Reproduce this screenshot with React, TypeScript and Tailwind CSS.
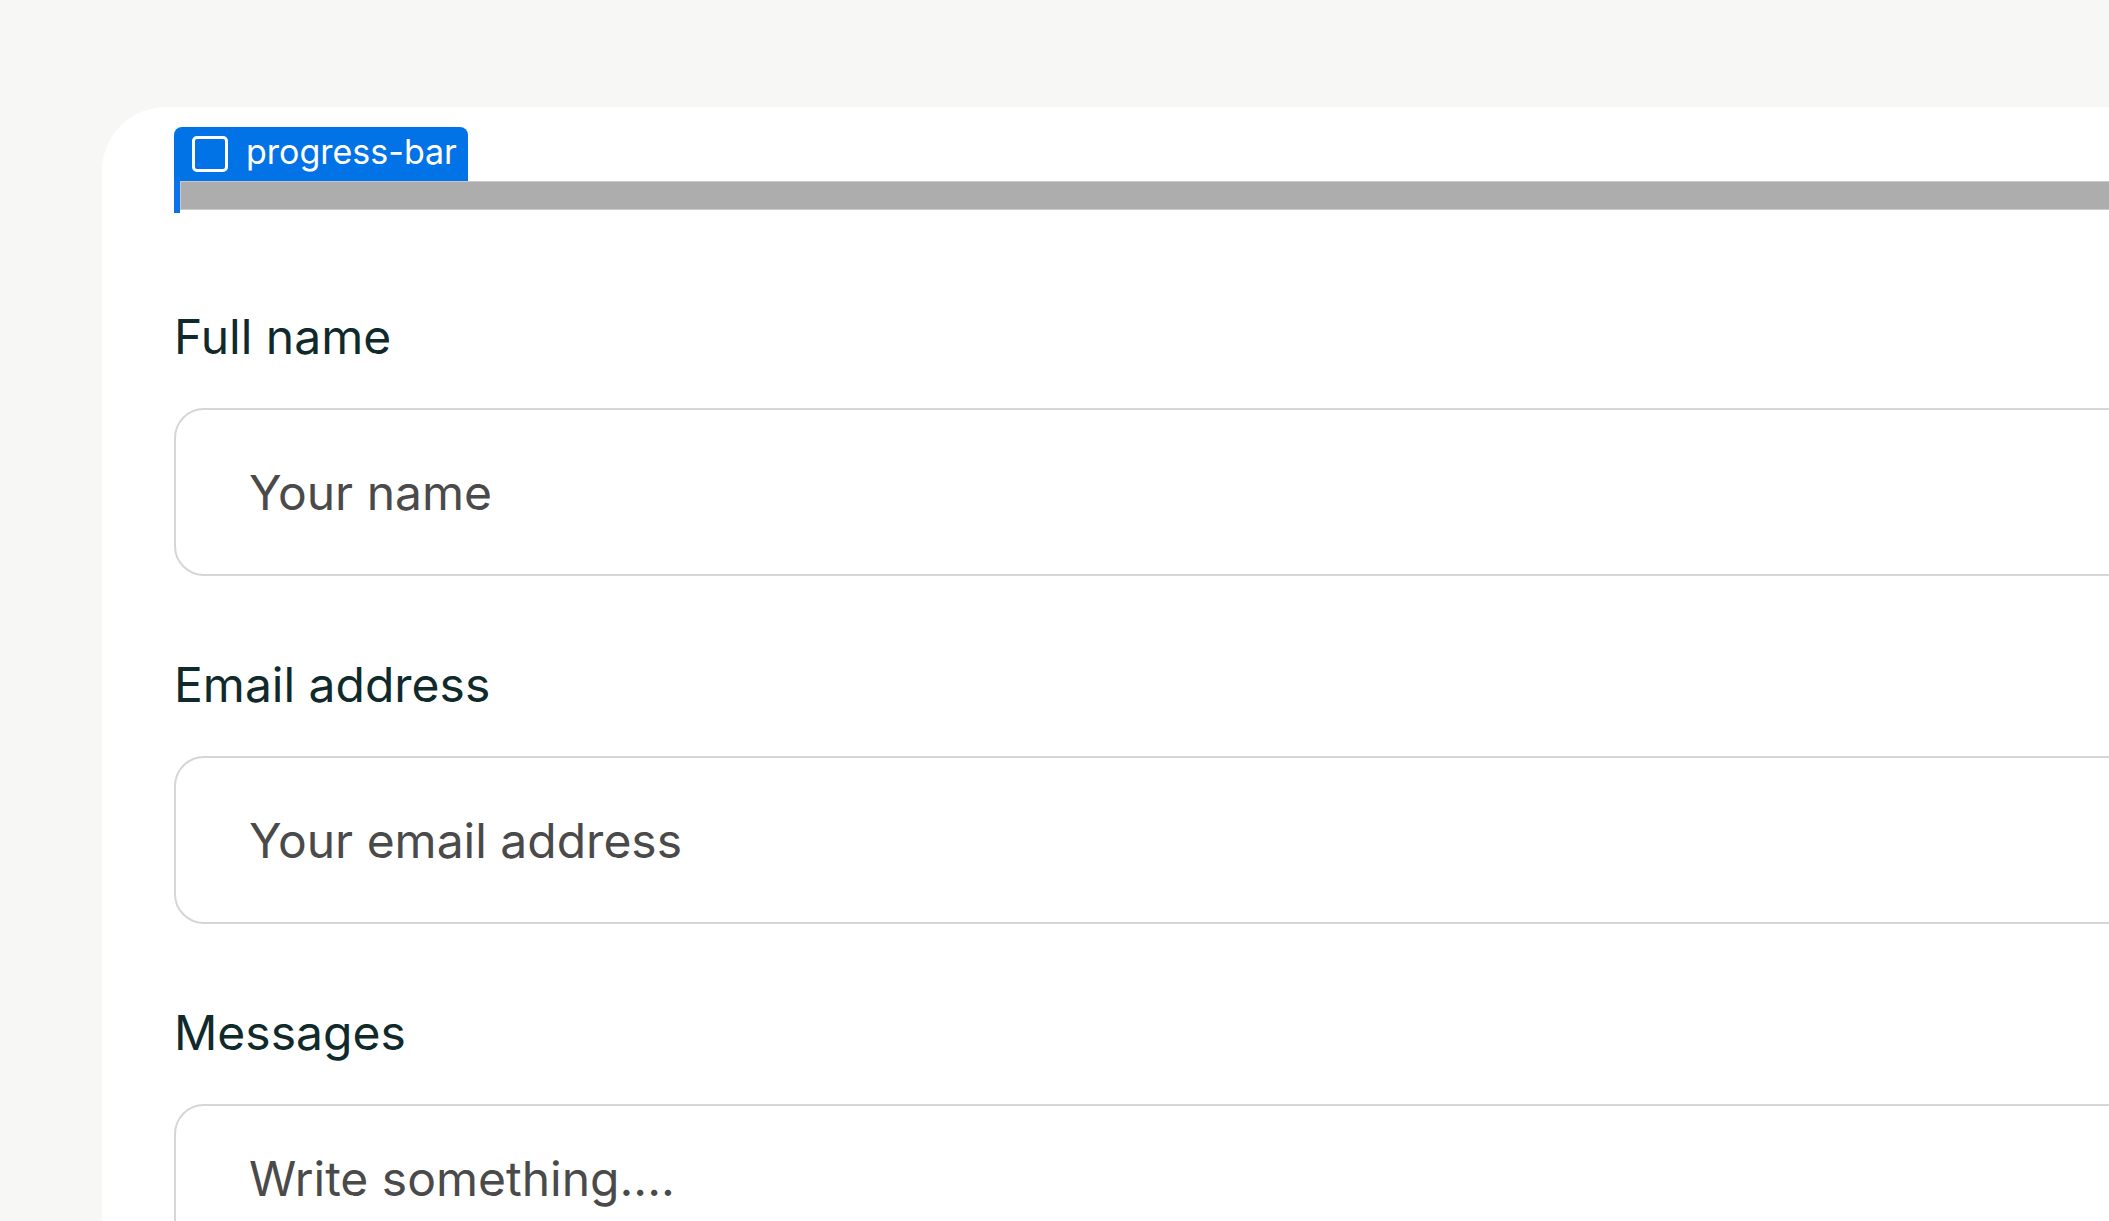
export default function App() {
  const field = "w-full rounded-[30px] border-2 border-[#d6d6d6] bg-white px-[73px] text-[48px] text-[#454545] placeholder:text-[#4a4a4a] outline-none";
  const label = "text-[48px] leading-[58px] text-[#102a2b]";
  return (
    <div className="h-screen w-full overflow-hidden bg-[#f7f7f5] pl-[102px] pt-[107px]" style={{ fontFamily: "Inter, 'Noto Sans', sans-serif" }}>
      <div className="w-[2300px] h-[1300px] rounded-tl-[64px] bg-white pl-[72px] pt-[20px]">
        <div className="flex flex-col">
          <div className="flex h-[54px] w-[294px] items-center gap-[18px] rounded-t-[8px] bg-[#0273e6] pl-[18px]">
            <div className="h-[36px] w-[36px] rounded-[5px] border-[3px] border-white" />
            <span className="text-[34px] leading-none text-white pb-[5px]">progress-bar</span>
          </div>
          <div className="flex h-[32px]">
            <div className="w-[6px] bg-[#0a72ea]" />
            <div className="h-[29px] flex-1 border border-[#c9c9c9] bg-[#adadad]" />
          </div>
        </div>
        <div className="mt-[95px] flex flex-col">
          <label className={label}>Full name</label>
          <input className={`mt-[42px] h-[168px] ${field}`} placeholder="Your name" />
          <label className={`mt-[80px] ${label}`}>Email address</label>
          <input className={`mt-[42px] h-[168px] ${field}`} placeholder="Your email address" />
          <label className={`mt-[80px] ${label}`}>Messages</label>
          <textarea className={`mt-[42px] h-[300px] resize-none pt-[44px] leading-[58px] ${field}`} placeholder="Write something...." />
        </div>
      </div>
    </div>
  );
}
